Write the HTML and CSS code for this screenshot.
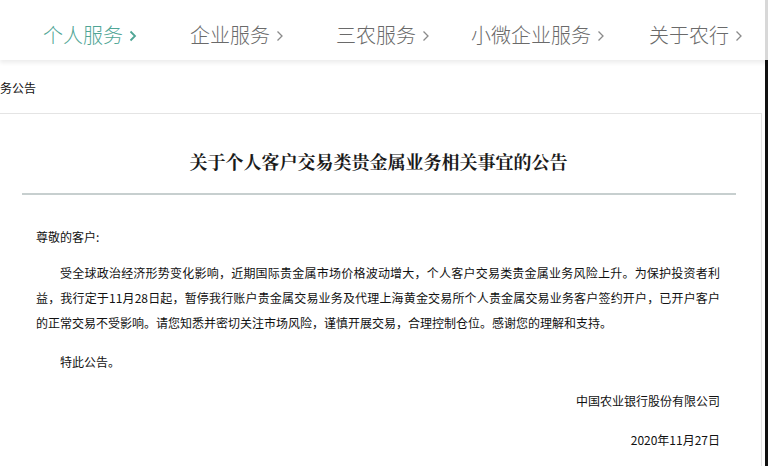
FILE: index.html
```html
<!DOCTYPE html>
<html lang="zh-CN">
<head>
<meta charset="utf-8">
<title>关于个人客户交易类贵金属业务相关事宜的公告</title>
<link rel="stylesheet" href="styles.css">
</head>
<body>
<div class="page">
  <header class="nav">
    <a class="nav-item active">个人服务<svg class="chev" width="8" height="12" viewBox="0 0 8 12"><polyline points="1.5,1.5 6,6 1.5,10.5"/></svg></a>
    <a class="nav-item">企业服务<svg class="chev" width="8" height="12" viewBox="0 0 8 12"><polyline points="1.5,1.5 6,6 1.5,10.5"/></svg></a>
    <a class="nav-item">三农服务<svg class="chev" width="8" height="12" viewBox="0 0 8 12"><polyline points="1.5,1.5 6,6 1.5,10.5"/></svg></a>
    <a class="nav-item">小微企业服务<svg class="chev" width="8" height="12" viewBox="0 0 8 12"><polyline points="1.5,1.5 6,6 1.5,10.5"/></svg></a>
    <a class="nav-item">关于农行<svg class="chev" width="8" height="12" viewBox="0 0 8 12"><polyline points="1.5,1.5 6,6 1.5,10.5"/></svg></a>
  </header>
  <div class="frame">
    <main class="content">
      <div class="crumb">务公告</div>
      <article class="article">
        <h1 class="title">关于个人客户交易类贵金属业务相关事宜的公告</h1>
        <div class="divider"></div>
        <div class="body">
          <p class="greet">尊敬的客户:</p>
          <p class="para">受全球政治经济形势变化影响，近期国际贵金属市场价格波动增大，个人客户交易类贵金属业务风险上升。为保护投资者利益，我行定于11月28日起，暂停我行账户贵金属交易业务及代理上海黄金交易所个人贵金属交易业务客户签约开户，已开户客户的正常交易不受影响。请您知悉并密切关注市场风险，谨慎开展交易，合理控制仓位。感谢您的理解和支持。</p>
          <p class="para">特此公告。</p>
          <p class="sign">中国农业银行股份有限公司</p>
          <p class="sign">2020年11月27日</p>
        </div>
      </article>
    </main>
    <div class="edge"></div>
  </div>
</div>
</body>
</html>
```
FILE: styles.css
```css
html, body {
  margin: 0;
  padding: 0;
  background: #fff;
}
.page {
  width: 768px;
  height: 466px;
  overflow: hidden;
  display: flex;
  flex-direction: column;
}
.nav {
  position: relative;
  z-index: 2;
  height: 60px;
  box-sizing: border-box;
  padding-left: 43px;
  padding-top: 10px;
  display: grid;
  grid-template-columns: 147px 146px 135px 178px auto;
  align-items: center;
  background: #fff;
  box-shadow: 0 3px 4px rgba(0, 0, 0, 0.07);
  border-right: 3px solid #d8d8d8;
  font-family: "Noto Sans CJK SC", "Noto Sans", sans-serif;
  font-weight: 300;
}
.nav-item {
  display: flex;
  align-items: center;
  font-size: 20px;
  line-height: 50px;
  color: #6a6a6a;
  text-decoration: none;
  white-space: nowrap;
}
.nav-item.active {
  color: #4fa595;
}
.chev {
  margin-left: 6px;
  margin-top: 2px;
  fill: none;
  stroke: #8a8a8a;
  stroke-width: 1.3;
}
.active .chev {
  stroke: #4fa595;
  stroke-width: 1.8;
}
.frame {
  flex: 1;
  display: flex;
}
.content {
  width: 762px;
  display: flex;
  flex-direction: column;
  font-family: "Noto Sans CJK SC", "Noto Sans", sans-serif;
}
.edge {
  width: 3px;
  margin-left: 3px;
  background: #111;
}
.crumb {
  height: 53px;
  box-sizing: border-box;
  padding-top: 18px;
  font-size: 12px;
  line-height: 20px;
  color: #111;
}
.article {
  flex: 1;
  border-top: 1px solid #e4e4e4;
  border-right: 1px solid #e4e4e4;
}
.title {
  margin: 35px 0 0;
  font-family: "Noto Serif CJK SC", "Noto Sans CJK SC", serif;
  font-size: 18px;
  line-height: 24px;
  font-weight: 700;
  color: #1a1a1a;
  text-align: center;
  padding-right: 4px;
}
.divider {
  height: 2px;
  margin: 20px 25px 0 22px;
  background: #c7cfcf;
}
.body {
  padding: 0 41px 0 36px;
  font-size: 12px;
  line-height: 25px;
  color: #111;
}
.body p {
  margin: 0;
}
.greet {
  padding-top: 29px;
}
.para {
  margin-top: 11px !important;
  text-indent: 2em;
  text-align: justify;
}
.para + .para {
  margin-top: 14px !important;
}
.sign {
  margin-top: 14px !important;
  text-align: right;
}
```
